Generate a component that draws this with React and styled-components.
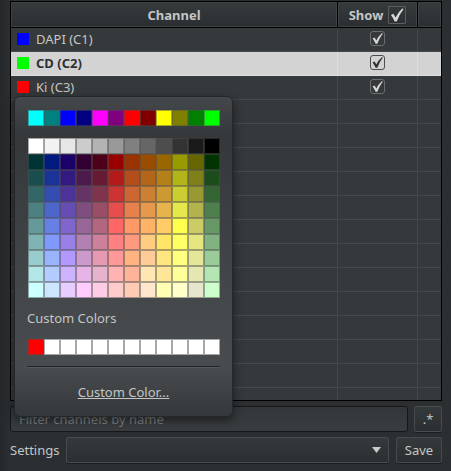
import React, { useState } from 'react';
import styled, { createGlobalStyle } from 'styled-components';

const GlobalStyle = createGlobalStyle`
    * {
        box-sizing: border-box;
    }

    body {
        margin: 0;
        background: #282c2f;
        color: #c4c6c6;
        font-family: 'Noto Sans', sans-serif;
        font-size: 13px;
        line-height: 16px;
    }

    button,
    input,
    select {
        font: inherit;
        color: inherit;
    }
`;

const Panel = styled.div`
    display: flex;
    flex-direction: column;
    height: 100vh;
    padding: 1px 9px 8px 10px;
    gap: 5px;
    background: linear-gradient(to right, #24282a, #2b2f32 10px, #2b2f32);
`;

const TableFrame = styled.div`
    flex: 1;
    min-height: 0;
    overflow: hidden;
    border: 1px solid #000;
    background: #36393b;
`;

const Table = styled.table`
    width: 100%;
    table-layout: fixed;
    border-collapse: separate;
    border-spacing: 0;

    .show {
        width: 80px;
    }

    .spare {
        width: 23px;
    }
`;

const HeadCell = styled.th`
    height: 26px;
    padding: 0;
    border-right: 1px solid #000;
    border-bottom: 1px solid #000;
    background: linear-gradient(#363b3d, #2a2e30);
    box-shadow: inset 0 0 0 1px #3d4244;
    font-weight: bold;

    &:last-child {
        border-right: 0;
    }
`;

const ShowLabel = styled.label`
    display: flex;
    align-items: center;
    justify-content: center;
    gap: 5px;
`;

const Row = styled.tr`
    background: ${({ $selected }) => ($selected ? '#d3d3d3' : '#36393b')};
    color: ${({ $selected }) => ($selected ? '#2e3133' : 'inherit')};
    font-weight: ${({ $selected }) => ($selected ? 'bold' : 'normal')};

    td {
        height: 24px;
        padding: 0 0 2px;
        border-right: 1px solid ${({ $selected }) => ($selected ? '#dcdcdc' : '#45494b')};
        border-bottom: 1px solid ${({ $selected }) => ($selected ? '#dcdfdc' : '#45494b')};
    }

    td:last-child {
        border-right: 0;
    }
`;

const ChannelName = styled.div`
    display: flex;
    align-items: center;
    gap: 7px;
    padding-left: 6px;
`;

const ChannelColor = styled.span`
    width: 12px;
    height: 12px;
    background: ${({ $color }) => $color};
`;

const CheckBox = styled.span`
    position: relative;
    display: flex;
    width: ${({ $size }) => $size}px;
    height: ${({ $size }) => $size}px;
    margin: 0 auto;
    border: 1px solid ${({ $dark }) => ($dark ? '#4a4e50' : '#6a6e70')};
    border-radius: 3px;
    color: ${({ $dark }) => ($dark ? '#2e3133' : '#d6d8d8')};

    input {
        position: absolute;
        inset: 0;
        margin: 0;
        width: 100%;
        height: 100%;
        opacity: 0;
    }

    svg {
        width: 100%;
        height: 100%;
        visibility: hidden;
    }

    input:checked + svg {
        visibility: visible;
    }
`;

const HeadCheckBox = styled(CheckBox)`
    margin: 0;
    border-color: #5a5e60;
    border-radius: 1px;
`;

const Line = styled.div`
    display: flex;
    gap: ${({ $gap }) => $gap}px;
    align-items: center;
`;

const FilterInput = styled.input`
    flex: 1;
    min-width: 0;
    height: 26px;
    padding: 0 8px;
    border: 1px solid #15181a;
    border-radius: 3px;
    background: linear-gradient(#333739, #393d3f);

    &::placeholder {
        color: #7b7e80;
        opacity: 1;
    }
`;

const Button = styled.button`
    width: ${({ $width }) => $width}px;
    height: 26px;
    padding: 0;
    border: 1px solid #474b4e;
    border-radius: 2px;
    background: linear-gradient(#34393b, #2b2f31);
    box-shadow: 0 1px 0 #1c1f21;
`;

const SelectBox = styled.div`
    position: relative;
    flex: 1;
    display: flex;

    select {
        appearance: none;
        width: 100%;
        height: 26px;
        border: 1px solid #474b4e;
        border-radius: 2px;
        background: linear-gradient(#34393b, #2b2f31);
        box-shadow: 0 1px 0 #1c1f21;
    }

    svg {
        position: absolute;
        right: 8px;
        top: 10px;
        pointer-events: none;
    }
`;

const Popup = styled.div`
    position: absolute;
    left: 14px;
    top: 96px;
    width: 219px;
    padding: 13px 12px 16px;
    border: 1px solid #24282a;
    border-radius: 6px;
    background: linear-gradient(#44484a, #34383a 40px, #44484a 200px, #484c4e 270px, #34383a);
    box-shadow: 0 3px 10px rgba(0, 0, 0, .5);
`;

const Swatches = styled.div`
    display: grid;
    grid-template-columns: repeat(12, 16px);
    margin-bottom: ${({ $space }) => $space}px;
    padding-left: 1px;
`;

const Swatch = styled.button`
    height: 16px;
    padding: 0;
    border: 1px solid rgba(80, 80, 80, .5);
    background: ${({ $color }) => $color};
`;

const CustomTitle = styled.div`
    margin-bottom: 13px;
`;

const Separator = styled.hr`
    margin: 0;
    border: 0;
    border-top: 1px solid #202426;
    border-bottom: 1px solid #565a5c;
`;

const CustomLink = styled.a`
    display: block;
    margin-top: 16px;
    color: inherit;
    text-align: center;
    text-decoration: underline;
`;

const channels = [
    { name: 'DAPI (C1)', color: '#0000ff' },
    { name: 'CD (C2)', color: '#00ff00', selected: true },
    { name: 'Ki (C3)', color: '#ff0000' },
];

const basicColors = [
    '#00ffff', '#008080', '#0000ff', '#000080', '#ff00ff', '#800080',
    '#ff0000', '#800000', '#ffff00', '#808000', '#008000', '#00ff00',
];

const standardColors = [
    '#ffffff', '#f2f2f2', '#e6e6e6', '#cccccc', '#b3b3b3', '#999999', '#808080', '#666666', '#4d4d4d', '#333333', '#1a1a1a', '#000000',
    '#003333', '#001a80', '#1a0068', '#330033', '#4d001a', '#990000', '#993300', '#994d00', '#996600', '#999900', '#666600', '#003300',
    '#1a4d4d', '#1a3399', '#331a80', '#4d1a4d', '#661a33', '#b31a1a', '#b34d1a', '#b3661a', '#b3801a', '#b3b31a', '#80801a', '#1a4d1a',
    '#336666', '#334db3', '#4d3399', '#663366', '#80334d', '#cc3333', '#cc6633', '#cc8033', '#cc9933', '#cccc33', '#999933', '#336633',
    '#4d8080', '#4d66cc', '#664db3', '#804d80', '#994d66', '#e64d4d', '#e6804d', '#e6994d', '#e6b34d', '#e6e64d', '#b3b34d', '#4d804d',
    '#669999', '#6680e6', '#8066cc', '#996699', '#b36680', '#ff6666', '#ff9966', '#ffb366', '#ffcc66', '#ffff4d', '#cccc66', '#669966',
    '#80b3b3', '#8099ff', '#9980e6', '#b380b3', '#cc8099', '#ff8080', '#ff9980', '#ffcc80', '#ffe666', '#ffff66', '#e6e680', '#80b380',
    '#99cccc', '#99b3ff', '#b399ff', '#cc99cc', '#e699b3', '#ff9999', '#ffb380', '#ffcc99', '#ffe680', '#ffff80', '#e6e699', '#99cc99',
    '#b3e6e6', '#b3ccff', '#ccb3ff', '#e6b3e6', '#e6b3cc', '#ffb3b3', '#ffb399', '#ffe6b3', '#ffe699', '#ffff99', '#e6e6b3', '#b3e6b3',
    '#ccffff', '#cce6ff', '#e6ccff', '#ffccff', '#ffcce6', '#ffcccc', '#ffccb3', '#ffe6cc', '#ffffb3', '#ffffcc', '#e6e6cc', '#ccffcc',
];

const customColors = ['#ff0000', ...Array(11).fill('#ffffff')];

const Check = ({ label, size, dark, as: Box = CheckBox }) => (
    <Box $size={size} $dark={dark}>
        <input type="checkbox" aria-label={label} defaultChecked />
        <svg viewBox="0 0 13 13" aria-hidden="true">
            <path d="M1.6 6.4 L3.6 5.4 L5.3 8.6 Q7.5 4 10.8 1.2 L11.9 1.6 Q8.4 6 6.3 11.8 H4.6 Q3.5 8.8 1.6 6.4Z" fill="currentColor" />
        </svg>
    </Box>
);

const ColorGrid = ({ colors, space = 12, onPick }) => (
    <Swatches $space={space}>
        {colors.map((color, i) => (
            <Swatch key={i} $color={color} type="button" aria-label={color} onClick={() => onPick(color)} />
        ))}
    </Swatches>
);

const ColorPopup = ({ onPick }) => (
    <Popup>
        <ColorGrid colors={basicColors} onPick={onPick} />
        <ColorGrid colors={standardColors} onPick={onPick} />
        <CustomTitle>Custom Colors</CustomTitle>
        <ColorGrid colors={customColors} space={11} onPick={onPick} />
        <Separator />
        <CustomLink href="#custom">Custom Color...</CustomLink>
    </Popup>
);

const App = () => {
    const [selectedColor, setSelectedColor] = useState('#00ff00');

    return (
        <>
            <GlobalStyle />
            <Panel>
                <TableFrame>
                    <Table>
                        <colgroup>
                            <col />
                            <col className="show" />
                            <col className="spare" />
                        </colgroup>
                        <thead>
                            <tr>
                                <HeadCell>Channel</HeadCell>
                                <HeadCell>
                                    <ShowLabel>
                                        Show
                                        <Check as={HeadCheckBox} label="Show all" size={18} />
                                    </ShowLabel>
                                </HeadCell>
                                <HeadCell />
                            </tr>
                        </thead>
                        <tbody>
                            {channels.map(({ name, color, selected }) => (
                                <Row key={name} $selected={selected}>
                                    <td>
                                        <ChannelName>
                                            <ChannelColor $color={selected ? selectedColor : color} />
                                            {name}
                                        </ChannelName>
                                    </td>
                                    <td>
                                        <Check label={`Show ${name}`} size={15} dark={selected} />
                                    </td>
                                    <td />
                                </Row>
                            ))}
                            {[...Array(13)].map((_, i) => (
                                <Row key={i}>
                                    <td />
                                    <td />
                                    <td />
                                </Row>
                            ))}
                        </tbody>
                    </Table>
                </TableFrame>
                <Line $gap={6}>
                    <FilterInput aria-label="Filter channels" placeholder="Filter channels by name" />
                    <Button type="button" $width={28}>.*</Button>
                </Line>
                <Line $gap={7}>
                    <label htmlFor="settings">Settings</label>
                    <SelectBox>
                        <select id="settings" />
                        <svg width="9" height="6" aria-hidden="true">
                            <path d="M0 0H9L4.5 6Z" fill="#c8caca" />
                        </svg>
                    </SelectBox>
                    <Button type="button" $width={46}>Save</Button>
                </Line>
            </Panel>
            <ColorPopup onPick={setSelectedColor} />
        </>
    );
};

export default App;
